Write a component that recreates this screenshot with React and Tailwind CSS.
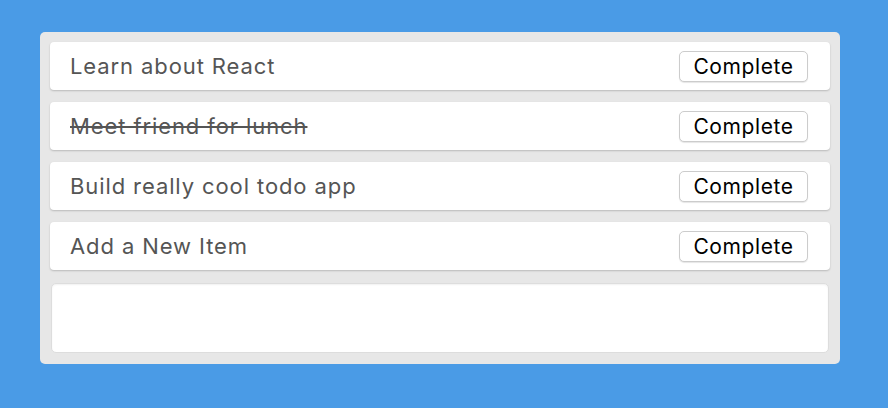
import React, { useState } from 'react'

const initialTodos = [
  { id: 1, text: 'Learn about React', done: false },
  { id: 2, text: 'Meet friend for lunch', done: true },
  { id: 3, text: 'Build really cool todo app', done: false },
  { id: 4, text: 'Add a New Item', done: false },
]

const Todo = ({ todo, onComplete }) => (
  <div className="flex items-center justify-between h-[48px] pl-[20px] pr-[22px] bg-white rounded-[4px] shadow-[0_1px_2px_rgba(0,0,0,0.2)]">
    <span className={`text-[22px] tracking-[0.9px] text-[#555] ${todo.done ? 'line-through' : ''}`}>{todo.text}</span>
    <button
      className="w-[129px] h-[31px] bg-white border border-[#ccc] rounded-[5px] text-[21px] tracking-[0.6px] text-black leading-none shadow-[0_1px_1px_rgba(0,0,0,0.1)]"
      onClick={onComplete}
    >
      Complete
    </button>
  </div>
)

const App = () => {
  const [todos, setTodos] = useState(initialTodos)
  return (
    <div className="w-[888px] h-[408px] bg-[#4a9be6] pt-[32px] pl-[40px] font-['Inter','Liberation_Sans',sans-serif]">
      <div className="w-[800px] h-[332px] bg-[#e7e7e7] rounded-[5px] p-[10px] flex flex-col gap-[12px]">
        {todos.map((todo) => (
          <Todo
            key={todo.id}
            todo={todo}
            onComplete={() => setTodos((prev) => prev.map((t) => (t.id === todo.id ? { ...t, done: true } : t)))}
          />
        ))}
        <input className="mx-[1px] mt-[1px] h-[70px] bg-white rounded-[5px] border border-[#ddd] shadow-[inset_0_1px_2px_rgba(0,0,0,0.06)] outline-none" />
      </div>
    </div>
  )
}

export default App
